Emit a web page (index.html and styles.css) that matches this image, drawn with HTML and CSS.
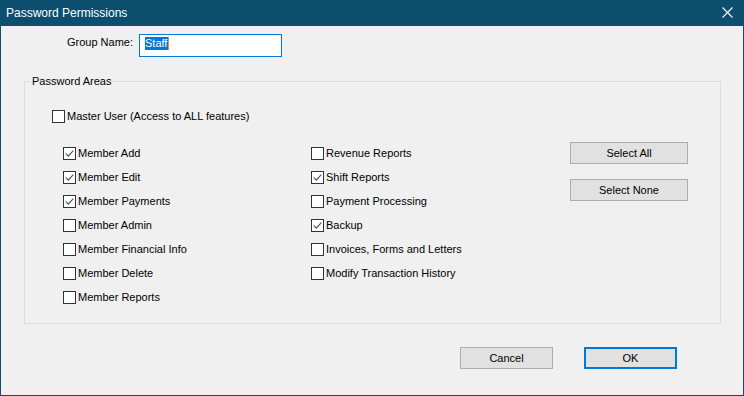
FILE: index.html
```html
<!DOCTYPE html>
<html>
<head>
  <title>Password Permissions</title>
  <link rel="stylesheet" href="styles.css">
</head>
<body>
  <div class="window">
    <div class="titlebar">
      <span class="title">Password Permissions</span>
      <svg class="close" width="11" height="11" viewBox="0 0 11 11">
        <path d="M0.5 0.5 L10.5 10.5 M10.5 0.5 L0.5 10.5" stroke="#ffffff" stroke-width="1.1" fill="none"/>
      </svg>
    </div>

    <div class="content">
      <div class="name-row">
        <label class="name-label">Group Name:</label>
        <div class="name-input"><span class="selected">Staff</span></div>
      </div>

      <fieldset class="areas">
        <legend>Password Areas</legend>
        <div class="areas-body">
          <div class="check master">
            <span class="box"></span>
            <span>Master User (Access to ALL features)</span>
          </div>

          <div class="columns">
            <div class="col col-left">
              <div class="check"><span class="box on"><svg viewBox="0 0 11 11"><path d="M1.8 5.6 L4.3 8.1 L9.3 2.6"/></svg></span><span>Member Add</span></div>
              <div class="check"><span class="box on"><svg viewBox="0 0 11 11"><path d="M1.8 5.6 L4.3 8.1 L9.3 2.6"/></svg></span><span>Member Edit</span></div>
              <div class="check"><span class="box on"><svg viewBox="0 0 11 11"><path d="M1.8 5.6 L4.3 8.1 L9.3 2.6"/></svg></span><span>Member Payments</span></div>
              <div class="check"><span class="box"></span><span>Member Admin</span></div>
              <div class="check"><span class="box"></span><span>Member Financial Info</span></div>
              <div class="check"><span class="box"></span><span>Member Delete</span></div>
              <div class="check"><span class="box"></span><span>Member Reports</span></div>
            </div>

            <div class="col col-right">
              <div class="check"><span class="box"></span><span>Revenue Reports</span></div>
              <div class="check"><span class="box on"><svg viewBox="0 0 11 11"><path d="M1.8 5.6 L4.3 8.1 L9.3 2.6"/></svg></span><span>Shift Reports</span></div>
              <div class="check"><span class="box"></span><span>Payment Processing</span></div>
              <div class="check"><span class="box on"><svg viewBox="0 0 11 11"><path d="M1.8 5.6 L4.3 8.1 L9.3 2.6"/></svg></span><span>Backup</span></div>
              <div class="check"><span class="box"></span><span>Invoices, Forms and Letters</span></div>
              <div class="check"><span class="box"></span><span>Modify Transaction History</span></div>
            </div>

            <div class="col col-buttons">
              <button class="button wide">Select All</button>
              <button class="button wide">Select None</button>
            </div>
          </div>
        </div>
      </fieldset>

      <div class="footer">
        <button class="button">Cancel</button>
        <button class="button default">OK</button>
      </div>
    </div>
  </div>
</body>
</html>
```

FILE: styles.css
```css
body {
  margin: 0;
  font-family: "Liberation Sans", Arial, sans-serif;
  font-size: 11px;
  color: #000;
}

.window {
  width: 744px;
  height: 396px;
  box-sizing: border-box;
  background-color: #f0f0f0;
  border: 1px solid #0b4e6e;
  border-top: none;
}

.titlebar {
  height: 26px;
  display: flex;
  align-items: center;
  justify-content: space-between;
  padding: 0 10px 0 5px;
  background-color: #0b4e6e;
  color: #fff;
}

.title {
  font-size: 12px;
  line-height: 26px;
}

.close {
  display: block;
  margin-top: -1px;
}

.name-row {
  display: flex;
  align-items: flex-start;
  margin-top: 8px;
}

.name-label {
  width: 132px;
  margin-right: 6px;
  padding-top: 2px;
  line-height: 13px;
  text-align: right;
}

.name-input {
  width: 143px;
  height: 23px;
  box-sizing: border-box;
  border: 1px solid #0078d7;
  background-color: #fff;
  padding: 2px 0 0 5px;
}

.selected {
  display: inline-block;
  line-height: 13px;
  padding-right: 1px;
  background-color: #0078d7;
  color: #fff;
  border-right: 1px solid #f08a24;
}

.areas {
  margin: 16px 22px 0 23px;
  padding: 0;
  border: 1px solid #dcdcdc;
}

.areas legend {
  margin-left: 6px;
  padding: 0 1px;
  line-height: 16px;
}

.areas-body {
  padding: 17px 0 14px 27px;
}

.check {
  display: flex;
  align-items: center;
  height: 24px;
  white-space: nowrap;
}

.master {
  height: 20px;
}

.box {
  width: 13px;
  height: 13px;
  box-sizing: border-box;
  border: 1px solid #333;
  background-color: #fff;
  margin-right: 2px;
  flex-shrink: 0;
}

.box svg {
  display: block;
  width: 11px;
  height: 11px;
  fill: none;
  stroke: #555;
  stroke-width: 1.2;
}

.columns {
  display: flex;
  margin: 15px 0 0 11px;
}

.col-left {
  width: 248px;
}

.col-right {
  width: 259px;
}

.col-buttons {
  display: flex;
  flex-direction: column;
  gap: 15px;
  padding-top: 1px;
}

.button {
  width: 93px;
  height: 22px;
  padding: 0;
  font-family: "Liberation Sans", Arial, sans-serif;
  font-size: 11px;
  color: #000;
  background-color: #e1e1e1;
  border: 1px solid #adadad;
}

.button.wide {
  width: 118px;
}

.button.default {
  border: 2px solid #0078d7;
}

.footer {
  display: flex;
  justify-content: flex-end;
  gap: 31px;
  margin-top: 23px;
  padding-right: 66px;
}
```
